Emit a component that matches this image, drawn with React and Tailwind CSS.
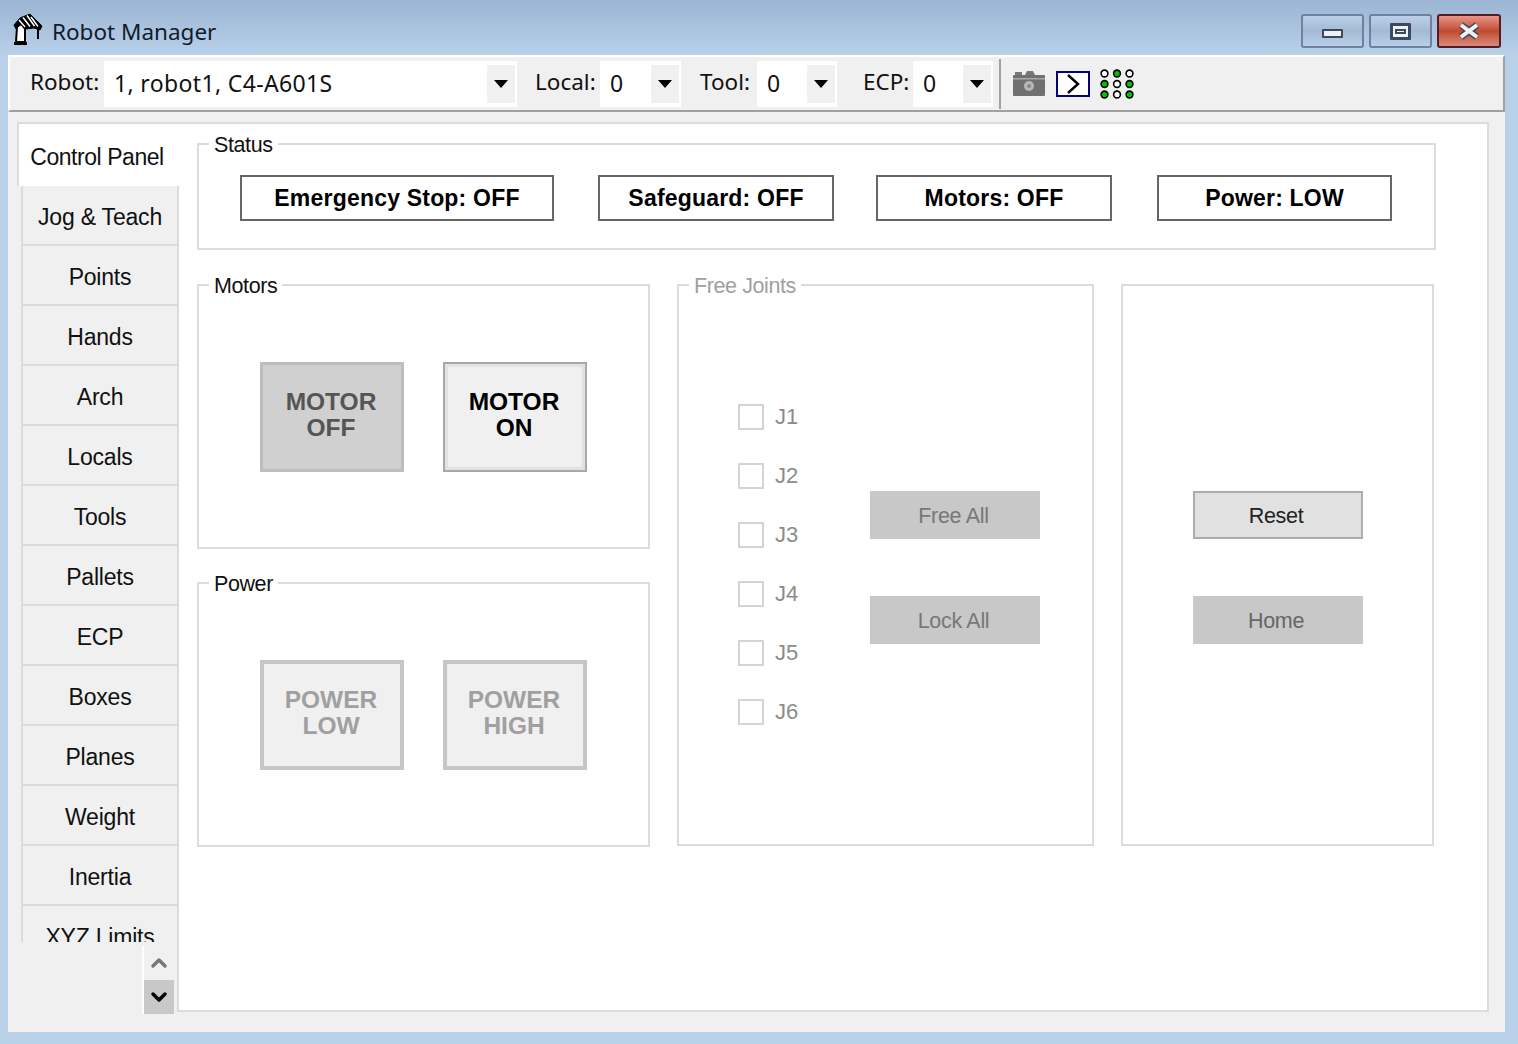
import { ChevronDown, ChevronUp } from "lucide-react";

const tabs = ["Jog & Teach", "Points", "Hands", "Arch", "Locals", "Tools", "Pallets", "ECP", "Boxes", "Planes", "Weight", "Inertia", "XYZ Limits"];
const joints = ["J1", "J2", "J3", "J4", "J5", "J6"];
const greenDots = ["1,0", "0,1", "2,1", "0,2", "2,2"];

function Combo({ value, width }) {
  return (
    <div className={`flex h-[46px] items-center bg-white pl-[10px] pr-[2px] ${width}`}>
      <span className="flex-1 text-[23px] tracking-[0.35px] text-[#111]">{value}</span>
      <span className="flex h-[38px] w-[28px] items-center justify-center bg-[#f0f0f0]">
        <span className="h-0 w-0 border-x-[7px] border-t-[8px] border-x-transparent border-t-black" />
      </span>
    </div>
  );
}

function Label({ className, children }) {
  return <span className={`pb-[3px] ${className}`}>{children}</span>;
}

function Group({ title, disabled, className, children }) {
  return (
    <div className={`relative border-2 border-[#dcdcdc] ${className}`}>
      {title && (
        <span className={`absolute -top-[14px] left-[10px] bg-white px-[5px] text-[21.5px] leading-[28px] tracking-[-0.4px] ${disabled ? "text-[#a0a0a0]" : "text-[#111]"}`}>
          {title}
        </span>
      )}
      {children}
    </div>
  );
}

function StatusBox({ className, children }) {
  return (
    <div className={`flex h-[46px] items-center justify-center border-2 border-[#666] bg-white text-[23px] font-bold tracking-[0.2px] text-black ${className}`}>
      {children}
    </div>
  );
}

function BigButton({ className, children }) {
  return (
    <div className={`flex h-[110px] w-[144px] items-center justify-center pb-[3px] pr-[2px] text-center text-[24.5px] font-bold leading-[26px] ${className}`}>
      <span>{children}</span>
    </div>
  );
}

function FlatButton({ className, children }) {
  return <div className={`flex h-[48px] w-[170px] items-center justify-center pr-[3px] pt-[3px] text-[21.5px] tracking-[-0.3px] ${className}`}>{children}</div>;
}

function RobotIcon() {
  return (
    <svg width="32" height="34" viewBox="0 0 32 34" fill="none" stroke="#000" strokeWidth="2" className="mt-[2px]">
      <path d="M4 30 L5 15 L9 12 L13 17 L13 30 Z" fill="#fff" />
      <path d="M2 31.5 H15" strokeWidth="3" />
      <path d="M2 13 L8 6 L18 2 L30 14 L28 18 L22 16 L14 17 L9 12 L4 17 Z" fill="#000" stroke="#000" strokeWidth="1" />
      <path d="M7 8 L13 15 M11 5.5 L18 14.5 M15 3.5 L22.5 14 M19 5 L26 14.5" stroke="#fff" strokeWidth="1.5" />
      <path d="M26 16 V27" />
    </svg>
  );
}

function CameraIcon() {
  return (
    <svg width="34" height="26" viewBox="0 0 34 26" className="ml-[11px]">
      <rect x="3" y="1" width="7" height="4" fill="#777" />
      <path d="M13 4 L15 0 H21 L23 4 Z" fill="#777" />
      <rect x="1" y="4" width="32" height="21" rx="1" fill="#707070" />
      <rect x="1" y="7" width="32" height="1.5" fill="#a8a8a8" />
      <circle cx="17" cy="15" r="5" fill="#b8b8b8" />
      <circle cx="17" cy="15" r="2" fill="#8a8a8a" />
    </svg>
  );
}

function DotsIcon() {
  const cells = [0, 1, 2].flatMap((x) => [0, 1, 2].map((y) => [x, y]));
  return (
    <svg width="34" height="30" viewBox="0 0 34 30" className="ml-[10px]">
      {cells.map(([x, y]) => (
        <circle
          key={`${x}-${y}`}
          cx={4.5 + x * 12.5}
          cy={4.5 + y * 10.5}
          r="3.4"
          stroke="#000"
          strokeWidth="1.6"
          fill={greenDots.includes(`${x},${y}`) ? "#00c000" : "#fff"}
        />
      ))}
    </svg>
  );
}

export default function App() {
  return (
    <div className="flex h-[1044px] w-[1518px] flex-col overflow-hidden bg-[#b9d0e9] font-['Liberation_Sans',Arial,sans-serif]">
      {/* title bar */}
      <div className="flex h-[55px] shrink-0 items-center bg-gradient-to-b from-[#9bb5d3] to-[#b9d0e9] pl-[12px] pr-[17px]">
        <RobotIcon />
        <span className="ml-[8px] mt-[9px] font-['Noto_Sans',sans-serif] text-[22.5px] text-[#101c2c]">Robot Manager</span>
        <div className="ml-auto flex gap-[5px] self-start pt-[14px]">
          <div className="flex h-[34px] w-[63px] items-center justify-center rounded-[3px] border-2 border-[#6f819c] bg-gradient-to-b from-[#bcd0e8] via-[#a3b9d4] to-[#b9d0ea]">
            <span className="mt-[4px] h-[9px] w-[21px] rounded-[1px] border-2 border-[#3e4a5c] bg-[#eef1f5]" />
          </div>
          <div className="flex h-[34px] w-[63px] items-center justify-center rounded-[3px] border-2 border-[#6f819c] bg-gradient-to-b from-[#bcd0e8] via-[#a3b9d4] to-[#b9d0ea]">
            <span className="flex h-[17px] w-[21px] items-center justify-center rounded-[1px] border-[3px] border-[#3e4a5c] bg-[#eef1f5]">
              <span className="h-[5px] w-[11px] border-2 border-[#3e4a5c]" />
            </span>
          </div>
          <div className="flex h-[34px] w-[64px] items-center justify-center rounded-[3px] border-2 border-[#551c24] bg-gradient-to-b from-[#e8958a] via-[#c04a30] to-[#d98a7c]">
            <svg width="24" height="18" viewBox="0 0 24 18">
              <path d="M4 3 L20 15 M20 3 L4 15" stroke="#3e4a5c" strokeWidth="7" />
              <path d="M4 3 L20 15 M20 3 L4 15" stroke="#f0f0f0" strokeWidth="4" />
            </svg>
          </div>
        </div>
      </div>

      {/* client area */}
      <div className="ml-[8px] flex h-[977px] w-[1497px] flex-col bg-[#f0f0f0]">
        <div className="flex h-[57px] shrink-0 items-center border-2 border-b-[#a0a0a0] border-l-white border-r-[#a0a0a0] border-t-white pl-[20px] font-['Noto_Sans',sans-serif] text-[22.5px] text-[#111]">
          <Label className="w-[74px]">Robot:</Label>
          <Combo value="1, robot1, C4-A601S" width="w-[413px]" />
          <Label className="ml-[18px] w-[65px]">Local:</Label>
          <Combo value="0" width="w-[81px]" />
          <Label className="ml-[19px] w-[57px]">Tool:</Label>
          <Combo value="0" width="w-[80px]" />
          <Label className="ml-[26px] w-[50px]">ECP:</Label>
          <Combo value="0" width="w-[80px]" />
          <span className="ml-[6px] h-[50px] w-[2px] bg-[#a0a0a0]" />
          <CameraIcon />
          <span className="ml-[10px] flex h-[26px] w-[34px] items-center justify-center border-2 border-[#000080] bg-white">
            <svg width="14" height="20" viewBox="0 0 14 20" fill="none" stroke="#000" strokeWidth="2.4">
              <path d="M2 1 L12 10 L2 19" />
            </svg>
          </span>
          <DotsIcon />
        </div>

        <div className="flex min-h-0 flex-1 pb-[18px] pl-[9px] pr-[16px] pt-[10px]">
          {/* tab strip, the active tab covers the page's left border */}
          <div className="relative z-10 flex w-[160px] shrink-0 flex-col">
            <div className="h-[820px] w-[162px] overflow-hidden">
              <div className="flex h-[64px] items-center justify-center border-l-2 border-t-2 border-[#dcdcdc] bg-white pr-[4px] pt-[4px] text-[23px] tracking-[-0.45px] text-[#111]">
                Control Panel
              </div>
              {tabs.map((t) => (
                <div key={t} className="ml-[4px] mr-[2px] flex h-[60px] items-center justify-center border-b-2 border-l-2 border-[#dcdcdc] bg-[#f0f0f0] pt-[4px] text-[23px] tracking-[-0.2px] text-[#111]">
                  {t}
                </div>
              ))}
            </div>
            <div className="mr-[3px] mt-[4px] flex flex-col self-end border-l-2 border-white">
              <span className="flex h-[34px] w-[30px] items-center justify-center">
                <ChevronUp size={24} strokeWidth={3.5} className="text-[#777]" />
              </span>
              <span className="flex h-[34px] w-[30px] items-center justify-center bg-[#c8c8c8]">
                <ChevronDown size={24} strokeWidth={3.5} className="text-black" />
              </span>
            </div>
          </div>

          {/* page */}
          <div className="mb-[2px] flex-1 border-2 border-[#dcdcdc] bg-white pl-[18px] pt-[19px]">
            <Group title="Status" className="flex h-[107px] w-[1239px] items-center pl-[41px] pt-[3px]">
              <StatusBox className="w-[314px]">Emergency Stop: OFF</StatusBox>
              <StatusBox className="ml-[44px] w-[236px]">Safeguard: OFF</StatusBox>
              <StatusBox className="ml-[42px] w-[236px]">Motors: OFF</StatusBox>
              <StatusBox className="ml-[45px] w-[235px]">Power: LOW</StatusBox>
            </Group>

            <div className="mt-[34px] flex gap-[27px]">
              <div className="flex w-[453px] flex-col gap-[33px]">
                <Group title="Motors" className="flex h-[265px] items-center justify-center gap-[39px]">
                  <BigButton className="border-[3px] border-[#bdbdbd] bg-[#d0d0d0] text-[#555]">MOTOR<br />OFF</BigButton>
                  <BigButton className="border-2 border-[#a8a8a8] bg-[#f0f0f0] text-black shadow-[inset_0_0_0_3px_#e2e2e2]">MOTOR<br />ON</BigButton>
                </Group>
                <Group title="Power" className="flex h-[265px] items-center justify-center gap-[39px]">
                  <BigButton className="border-[4px] border-[#c6c6c6] bg-[#f0f0f0] text-[#a0a0a0]">POWER<br />LOW</BigButton>
                  <BigButton className="border-[4px] border-[#c6c6c6] bg-[#f0f0f0] text-[#a0a0a0]">POWER<br />HIGH</BigButton>
                </Group>
              </div>

              <Group title="Free Joints" disabled className="flex h-[562px] w-[417px] items-center pl-[59px]">
                <div className="mb-[2px] flex w-[132px] flex-col gap-[33px]">
                  {joints.map((j) => (
                    <div key={j} className="flex h-[26px] items-center gap-[11px] text-[22px] text-[#8c8c8c]">
                      <span className="h-[26px] w-[26px] border-2 border-[#d4d4d4] bg-white" />
                      {j}
                    </div>
                  ))}
                </div>
                <div className="mt-[4px] flex flex-col gap-[57px]">
                  <FlatButton className="bg-[#c8c8c8] text-[#777]">Free All</FlatButton>
                  <FlatButton className="bg-[#c8c8c8] text-[#777]">Lock All</FlatButton>
                </div>
              </Group>

              <Group className="flex h-[562px] w-[313px] items-center justify-center">
                <div className="mt-[4px] flex flex-col gap-[57px]">
                  <FlatButton className="border-2 border-[#adadad] bg-[#e1e1e1] text-[#222]">Reset</FlatButton>
                  <FlatButton className="bg-[#c8c8c8] text-[#666]">Home</FlatButton>
                </div>
              </Group>
            </div>
          </div>
        </div>
      </div>
    </div>
  );
}
